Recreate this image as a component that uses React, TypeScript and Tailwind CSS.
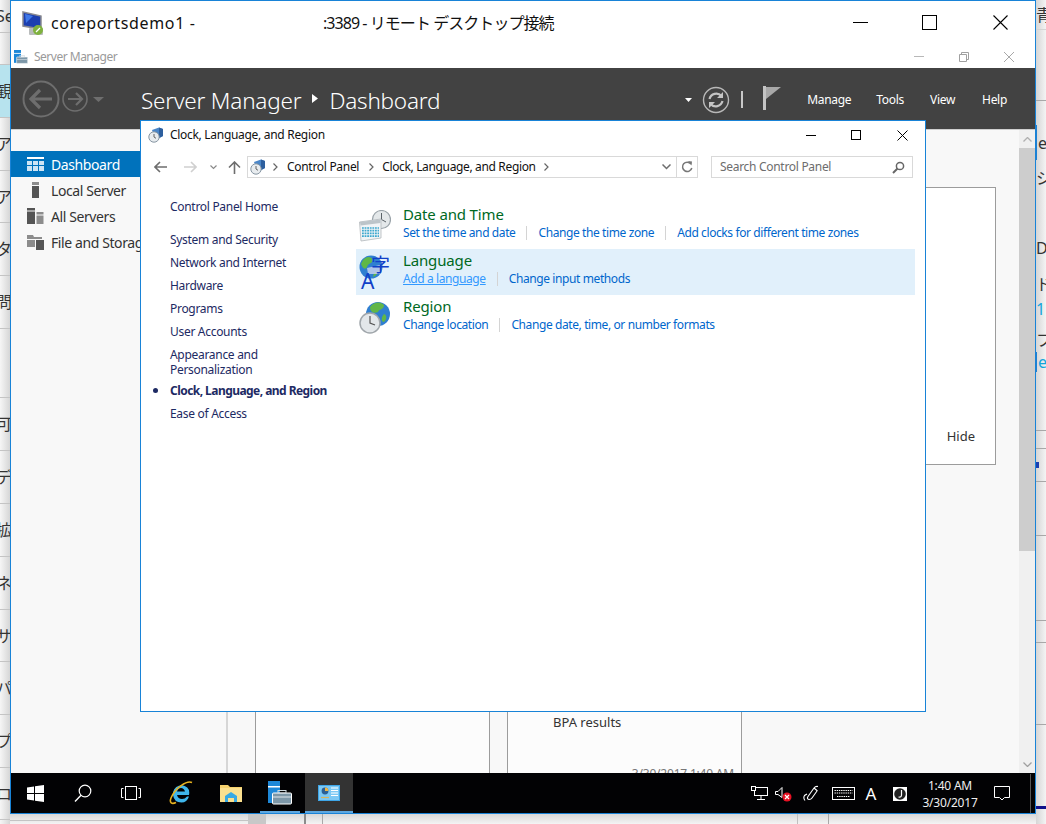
const leftRows = [
  { h: 33, text: 'Se' },
  { h: 32, text: '' },
  { h: 53, text: '観', blue: true },
  { h: 53, text: 'ア' },
  { h: 52, text: 'ア' },
  { h: 53, text: 'タ' },
  { h: 53, text: '問' },
  { h: 69, text: '' },
  { h: 53, text: '可' },
  { h: 53, text: 'デ' },
  { h: 53, text: '拡' },
  { h: 53, text: 'ネ' },
  { h: 52, text: 'サ' },
  { h: 53, text: 'パ' },
  { h: 53, text: 'プ' },
  { h: 52, text: 'ロ' },
]

const rightRows = [
  { h: 30, text: '青', line: 'border-[#d4d4d4]' },
  { h: 71, text: '', line: 'border-[#a8a8a8]' },
  { h: 24, text: '' },
  { h: 35, text: 'e', bar: true },
  { h: 36, text: 'シ' },
  { h: 39, text: '' },
  { h: 25, text: 'D' },
  { h: 12, text: '' },
  { h: 24, text: 'ド' },
  { h: 26, text: '1', cyan: true },
  { h: 6, text: '' },
  { h: 24, text: 'フ' },
  { h: 20, text: 'e', cyan: true, bar: true },
  { h: 59, text: '', line: 'border-[#a8a8a8]' },
  { h: 18, text: '', line: 'border-[#a8a8a8]' },
  { h: 33, text: '', line: 'border-[#a8a8a8]', mark: true },
  { h: 54, text: '', line: 'border-[#a8a8a8]' },
  { h: 85, text: '', line: 'border-[#a8a8a8]' },
  { h: 22, text: '', line: 'border-[#a8a8a8]' },
  { h: 82, text: '', line: 'border-[#a8a8a8]' },
  { h: 81, text: '' },
]

const navItems = [
  { label: 'System and Security', h: 23 },
  { label: 'Network and Internet', h: 23 },
  { label: 'Hardware', h: 23 },
  { label: 'Programs', h: 23 },
  { label: 'User Accounts', h: 23 },
  { label: 'Appearance and Personalization', h: 35 },
  { label: 'Clock, Language, and Region', h: 23, active: true },
  { label: 'Ease of Access', h: 23 },
]

const categories = [
  { title: 'Date and Time', icon: 'clock', links: ['Set the time and date', 'Change the time zone', 'Add clocks for different time zones'] },
  { title: 'Language', icon: 'language', links: ['Add a language', 'Change input methods'], hovered: true },
  { title: 'Region', icon: 'region', links: ['Change location', 'Change date, time, or number formats'] },
]

function RdpIcon() {
  return (
    <svg width="26" height="26" viewBox="0 0 26 26">
      <path d="M2 2 L20 6 V19 L2 16 Z" fill="#1c3fb0" stroke="#8a8a90" strokeWidth="1.5" />
      <path d="M4 4 L12 6 L5 13 Z" fill="#3f78e8" />
      <rect x="8" y="18" width="14" height="7" rx="1" fill="#b9bcbc" />
      <circle cx="17" cy="20" r="5" fill="#7fb23e" />
      <path d="M15 22 L19 18" stroke="#fff" strokeWidth="1.2" />
    </svg>
  )
}

function ServerManagerIcon({ size = 14 }: { size?: number }) {
  return (
    <svg width={size} height={size} viewBox="0 0 24 24">
      <rect x="0" y="0" width="12" height="22" fill="#1e88d8" />
      <rect x="0" y="5" width="12" height="1.5" fill="#fff" />
      <rect x="4.5" y="12" width="19" height="11" rx="1" fill="#7d97a8" stroke="#fff" strokeWidth="1" />
      <rect x="10" y="9.5" width="8" height="2.5" fill="none" stroke="#cfd8de" strokeWidth="1" />
      <rect x="5" y="15.5" width="18" height="1" fill="#dfe6ea" />
    </svg>
  )
}

function ControlPanelGlobe({ size = 16 }: { size?: number }) {
  return (
    <svg width={size} height={size} viewBox="0 0 16 16">
      <path d="M4 3 L11 0.5 L15 2 V9 L8 13 Z" fill="#4a86c8" />
      <path d="M11 0.5 L15 2 V9 L11 11 Z" fill="#2d5f9e" />
      <circle cx="6" cy="10" r="5.2" fill="#e8ecef" stroke="#8796a3" strokeWidth="1" />
      <path d="M6 7 V10 L8 11.3" fill="none" stroke="#555" strokeWidth="0.9" />
    </svg>
  )
}

function ClockCalendarIcon() {
  return (
    <svg width="32" height="32" viewBox="0 0 32 32">
      <circle cx="22.5" cy="9.5" r="9" fill="#e4e8ea" stroke="#9aa3a9" strokeWidth="1.2" />
      <path d="M22.5 3 V9.5 L27 12" fill="none" stroke="#5a6268" strokeWidth="1" />
      <path d="M0.5 12 L22 9 V28 L2 31 Z" fill="#f1f4f6" stroke="#b3b8bb" strokeWidth="0.8" />
      <path d="M1 12 L21.5 9.5 V13 L1.5 15.5 Z" fill="#bcc4c9" />
      <path d="M3 18 H20 M3 20.7 H20 M3 23.4 H20 M3 26.1 H20" stroke="#3ea8cf" strokeWidth="1.7" strokeDasharray="1.8 0.8" />
    </svg>
  )
}

function LanguageIcon() {
  return (
    <svg width="32" height="34" viewBox="0 0 32 34">
      <circle cx="12" cy="12" r="11.5" fill="#2f7fd1" />
      <path d="M4 5 C8 0 13 2 14 5 C13 9 9 8 8 12 C6 16 3 12 2 9 Z" fill="#5fb848" />
      <path d="M15 18 C18 15 21 16 21 13 C19 18 17 21 14 22 Z" fill="#5fb848" />
      <path d="M8 13 L21 10 V19 L9 19 Z" fill="#c4d0ee" opacity="0.85" />
      <text x="12" y="17" fontSize="19" fill="#1140c8" fontFamily="'Noto Sans CJK JP', sans-serif">字</text>
      <text x="2" y="34" fontSize="21" fill="#1140c8" fontFamily="'Noto Sans', sans-serif">A</text>
    </svg>
  )
}

function RegionIcon() {
  return (
    <svg width="32" height="34" viewBox="0 0 32 34">
      <circle cx="19" cy="13" r="12" fill="#2f7fd1" />
      <path d="M11 6 C16 0 22 1 25 4 C25 9 20 8 19 11 C15 13 11 11 11 6 Z" fill="#62b648" />
      <path d="M25 13 C28 14 28 18 25 21 C22 21 22 16 25 13 Z" fill="#62b648" />
      <circle cx="11" cy="22" r="10" fill="#e3e7ea" stroke="#a0a6ab" strokeWidth="1.5" />
      <path d="M11 15 V22 L16 24" fill="none" stroke="#555" strokeWidth="1.2" />
    </svg>
  )
}

function CategoryIcon({ name }: { name: string }) {
  if (name === 'clock') return <ClockCalendarIcon />
  if (name === 'language') return <LanguageIcon />
  return <RegionIcon />
}

function SidebarIcon({ name }: { name: string }) {
  if (name === 'dashboard') {
    return (
      <svg width="18" height="15" viewBox="0 0 18 15">
        <rect x="0" y="0" width="17" height="2" fill="#fff" />
        <path d="M0 4 H5 V8 H0 Z M6 4 H11 V8 H6 Z M12 4 H17 V8 H12 Z M0 9 H5 V14 H0 Z M6 9 H11 V14 H6 Z M12 9 H17 V14 H12 Z" fill="#cfe5f5" />
      </svg>
    )
  }
  if (name === 'local') {
    return (
      <svg width="18" height="16" viewBox="0 0 18 16">
        <rect x="5" y="0" width="7" height="3" fill="#8c8c8c" />
        <rect x="5" y="4" width="7" height="12" fill="#555" />
      </svg>
    )
  }
  if (name === 'all') {
    return (
      <svg width="18" height="16" viewBox="0 0 18 16">
        <rect x="0" y="0" width="8" height="2.5" fill="#555" />
        <rect x="0" y="3.5" width="8" height="12.5" fill="#555" />
        <rect x="9.5" y="4" width="7" height="2.5" fill="#8c8c8c" />
        <rect x="9.5" y="7.5" width="7" height="8.5" fill="#8c8c8c" />
      </svg>
    )
  }
  return (
    <svg width="18" height="16" viewBox="0 0 18 16">
      <path d="M0 1 H6 L7 3 H15 V5 H0 Z" fill="#8c8c8c" />
      <rect x="0" y="6" width="8" height="7" fill="#8c8c8c" />
      <rect x="9" y="6" width="8" height="10" fill="#555" />
    </svg>
  )
}

function LeftStrip() {
  return (
    <div className="flex h-[824px] w-[10px] shrink-0 flex-col overflow-hidden bg-linear-to-l from-[#d6d6d6] to-[#f6f6f6]">
      {leftRows.map((row, index) => (
        <div
          key={index}
          style={{ height: row.h }}
          className={`flex shrink-0 items-center overflow-hidden border-b border-[#c4c4c4] text-[16px] whitespace-nowrap text-[#333] ${row.blue ? 'bg-[#b7e3ee]' : ''}`}
        >
          <span className="ml-[-4px]">{row.text}</span>
        </div>
      ))}
    </div>
  )
}

function RightStrip() {
  return (
    <div className="flex h-[824px] w-[10px] shrink-0 flex-col overflow-hidden bg-linear-to-r from-[#d6d6d6] to-[#f4f4f4]">
      {rightRows.map((row, index) => (
        <div
          key={index}
          style={{ height: row.h }}
          className={`flex shrink-0 items-center overflow-hidden text-[16px] whitespace-nowrap ${row.line ? `border-b ${row.line}` : ''} ${row.cyan ? 'text-[#12a5dc]' : 'text-[#333]'}`}
        >
          {row.bar && <span className="mr-[1px] h-full w-[1px] shrink-0 bg-[#1f7fd0]" />}
          {row.mark && <span className="h-[6px] w-[3px] bg-[#1c3fb0]" />}
          <span>{row.text}</span>
        </div>
      ))}
      <div className="h-[3px] shrink-0 bg-[#10108a]" />
    </div>
  )
}

function RdpTitleBar() {
  return (
    <div className="flex h-[43px] shrink-0 items-center bg-white pl-[10px] text-[16px] text-[#111]">
      <RdpIcon />
      <span className="ml-[4px] w-[272px] tracking-[0.65px]">coreportsdemo1 -</span>
      <span className="whitespace-nowrap tracking-[-0.95px]">:3389 - リモート デスクトップ接続</span>
      <div className="ml-auto flex items-center pr-[27px]">
        <span className="h-[1px] w-[15px] bg-black" />
        <span className="ml-[54px] h-[15px] w-[15px] border border-black" />
        <svg className="ml-[56px]" width="15" height="15" viewBox="0 0 15 15">
          <path d="M0.5 0.5 L14.5 14.5 M14.5 0.5 L0.5 14.5" stroke="#000" strokeWidth="1.1" />
        </svg>
      </div>
    </div>
  )
}

function ServerManagerTitle() {
  return (
    <div className="flex h-[24px] shrink-0 items-center bg-white pt-[1px] pl-[3px] text-[12px] tracking-[-0.5px] text-[#9a9a9a]">
      <ServerManagerIcon />
      <span className="ml-[6px]">Server Manager</span>
      <div className="ml-auto flex items-center pr-[21px]">
        <span className="h-[1px] w-[10px] bg-[#b8b8b8]" />
        <svg className="ml-[35px]" width="10" height="10" viewBox="0 0 10 10">
          <path d="M0.5 2.5 H7.5 V9.5 H0.5 Z M2.5 2.5 V0.5 H9.5 V7.5 H7.5" fill="none" stroke="#a0a0a0" />
        </svg>
        <svg className="ml-[35px]" width="10" height="10" viewBox="0 0 10 10">
          <path d="M0 0 L10 10 M10 0 L0 10" stroke="#a8a8a8" />
        </svg>
      </div>
    </div>
  )
}

function ServerManagerHeader() {
  return (
    <div className="flex h-[62px] shrink-0 items-center border-b border-[#cfcfcf] bg-[#424242] pl-[11px] text-white">
      <svg width="84" height="40" viewBox="0 0 84 40">
        <circle cx="19" cy="20" r="17.5" fill="none" stroke="#6e6e6e" strokeWidth="2" />
        <path d="M9 20 H30 M18 11 L9 20 L18 29" fill="none" stroke="#6e6e6e" strokeWidth="3.2" />
        <circle cx="53" cy="20" r="12" fill="none" stroke="#6e6e6e" strokeWidth="1.6" />
        <path d="M46 20 H60 M54 14 L60 20 L54 26" fill="none" stroke="#6e6e6e" strokeWidth="2.2" />
        <path d="M71 18 H82 L76.5 23 Z" fill="#6e6e6e" />
      </svg>
      <span className="mt-[5px] ml-[35px] text-[22.5px] font-light tracking-[-0.2px] whitespace-nowrap">Server Manager</span>
      <svg className="ml-[11px]" width="6" height="9" viewBox="0 0 6 9">
        <path d="M0 0 L6 4.5 L0 9 Z" fill="#fff" />
      </svg>
      <span className="mt-[5px] ml-[11px] text-[22.5px] font-light tracking-[-0.2px]">Dashboard</span>
      <div className="ml-auto flex items-center pt-[2px] pr-[28px] text-[12px] tracking-[-0.3px]">
        <svg width="7" height="4" viewBox="0 0 7 4">
          <path d="M0 0 H7 L3.5 4 Z" fill="#fff" />
        </svg>
        <svg className="ml-[10px]" width="28" height="28" viewBox="0 0 28 28">
          <circle cx="14" cy="14" r="12.5" fill="none" stroke="#b8b8b8" strokeWidth="1.4" />
          <path d="M7.5 13 A7 7 0 0 1 19.5 10 M20.5 15 A7 7 0 0 1 8.5 18" fill="none" stroke="#c4c4c4" strokeWidth="2.2" />
          <path d="M21 6 V12 H15 Z M7 22 V16 H13 Z" fill="#c4c4c4" />
        </svg>
        <span className="ml-[11px] h-[17px] w-[2px] bg-[#c8c8c8]" />
        <svg className="mb-[4px] ml-[20px]" width="18" height="24" viewBox="0 0 18 24">
          <rect x="0" y="0" width="3" height="24" fill="#c4c4c4" />
          <path d="M3 1 H18 L3 13 Z" fill="#a8a8a8" />
        </svg>
        <span className="ml-[26px]">Manage</span>
        <span className="ml-[25px]">Tools</span>
        <span className="ml-[26px]">View</span>
        <span className="ml-[27px]">Help</span>
      </div>
    </div>
  )
}

function Sidebar() {
  const items = [
    { label: 'Dashboard', icon: 'dashboard', active: true },
    { label: 'Local Server', icon: 'local' },
    { label: 'All Servers', icon: 'all' },
    { label: 'File and Storage Services', icon: 'file' },
  ]

  return (
    <div className="w-[217px] shrink-0 border-r-2 border-[#d6d6d6] pt-[21px] text-[14px] tracking-[-0.4px]">
      {items.map((item) => (
        <div
          key={item.label}
          className={`flex h-[26px] items-center pl-[16px] whitespace-nowrap ${item.active ? 'bg-[#0072bc] text-white' : 'text-[#333]'}`}
        >
          <SidebarIcon name={item.icon} />
          <span className="ml-[6px]">{item.label}</span>
        </div>
      ))}
    </div>
  )
}

function DashboardContent() {
  return (
    <div className="min-w-0 flex-1 overflow-hidden pt-[57px] pl-[27px] text-[13px] text-[#333]">
      <div className="flex h-[278px] w-[741px] items-end justify-end border border-[#9c9c9c] bg-white pr-[20px] pb-[18px]">
        Hide
      </div>
      <div className="mt-[21px] flex gap-[17px]">
        <div className="h-[400px] w-[235px] shrink-0 border border-[#9c9c9c] bg-[#fcfcfc]" />
        <div className="h-[400px] w-[235px] shrink-0 border border-[#9c9c9c] bg-[#fcfcfc] pt-[227px]">
          <div className="pl-[45px] leading-[16px]">BPA results</div>
          <div className="mt-[36px] pr-[7px] text-right text-[12px] leading-[16px] tracking-[-0.2px] text-[#777]">3/30/2017 1:40 AM</div>
        </div>
      </div>
    </div>
  )
}

function ScrollBar() {
  return (
    <div className="flex w-[16px] shrink-0 flex-col bg-[#f0f0f0]">
      <div className="flex h-[18px] items-center justify-center">
        <svg width="9" height="5" viewBox="0 0 9 5">
          <path d="M0.5 4.5 L4.5 0.5 L8.5 4.5" fill="none" stroke="#b0b0b0" strokeWidth="1.3" />
        </svg>
      </div>
      <div className="h-[403px] bg-[#cdcdcd]" />
      <div className="flex flex-1 items-end justify-center pb-[6px]">
        <svg width="9" height="5" viewBox="0 0 9 5">
          <path d="M0.5 0.5 L4.5 4.5 L8.5 0.5" fill="none" stroke="#a0a0a0" strokeWidth="1.3" />
        </svg>
      </div>
    </div>
  )
}

function Crumb({ className }: { className: string }) {
  return (
    <svg className={className} width="5" height="8" viewBox="0 0 5 8">
      <path d="M0.5 0.5 L4 4 L0.5 7.5" fill="none" stroke="#666" strokeWidth="1.2" />
    </svg>
  )
}

function ControlPanelWindow() {
  return (
    <div className="absolute top-[119px] left-[129px] h-[592px] w-[786px] border border-[#1883d7] bg-white text-[12px] tracking-[-0.3px]">
      <div className="flex h-[28px] items-center pl-[7px] text-[#111]">
        <ControlPanelGlobe />
        <span className="ml-[6px]">Clock, Language, and Region</span>
        <div className="ml-auto flex items-center pr-[17px]">
          <span className="h-[1px] w-[10px] bg-black" />
          <span className="ml-[35px] h-[10px] w-[10px] border border-black" />
          <svg className="ml-[36px]" width="11" height="11" viewBox="0 0 11 11">
            <path d="M0.5 0.5 L10.5 10.5 M10.5 0.5 L0.5 10.5" stroke="#000" />
          </svg>
        </div>
      </div>
      <div className="mt-[7px] flex h-[22px] items-center pl-[13px]">
        <svg width="13" height="12" viewBox="0 0 13 12">
          <path d="M1 6 H13 M6 1 L1 6 L6 11" fill="none" stroke="#6e6e6e" strokeWidth="1.6" />
        </svg>
        <svg className="ml-[17px]" width="13" height="12" viewBox="0 0 13 12">
          <path d="M0 6 H12 M7 1 L12 6 L7 11" fill="none" stroke="#d0d0d0" strokeWidth="1.6" />
        </svg>
        <svg className="ml-[13px]" width="7" height="5" viewBox="0 0 7 5">
          <path d="M0.5 0.5 L3.5 3.5 L6.5 0.5" fill="none" stroke="#8a8a8a" strokeWidth="1.2" />
        </svg>
        <svg className="ml-[11px]" width="13" height="13" viewBox="0 0 13 13">
          <path d="M6.5 13 V1 M1 6.5 L6.5 1 L12 6.5" fill="none" stroke="#6e6e6e" strokeWidth="1.6" />
        </svg>
        <div className="ml-[6px] flex h-[22px] w-[451px] items-center border border-[#d9d9d9] pl-[2px] text-[#111]">
          <ControlPanelGlobe />
          <Crumb className="ml-[7px]" />
          <span className="ml-[9px]">Control Panel</span>
          <Crumb className="ml-[10px]" />
          <span className="ml-[8px] tracking-[-0.35px]">Clock, Language, and Region</span>
          <Crumb className="ml-[8px]" />
          <div className="ml-auto flex h-full items-center">
            <svg width="9" height="6" viewBox="0 0 9 6">
              <path d="M0.5 0.5 L4.5 4.5 L8.5 0.5" fill="none" stroke="#6e6e6e" strokeWidth="1.5" />
            </svg>
            <span className="ml-[5px] h-full w-[1px] bg-[#d9d9d9]" />
            <svg className="mx-[4px]" width="12" height="12" viewBox="0 0 12 12">
              <path d="M10 3 A4.7 4.7 0 1 0 10.8 7" fill="none" stroke="#777" strokeWidth="1.5" />
              <path d="M7 0 L11 0.5 L10.5 4.5 Z" fill="#777" />
            </svg>
          </div>
        </div>
        <div className="ml-[13px] flex h-[22px] w-[202px] items-center justify-between border border-[#d9d9d9] pr-[7px] pl-[8px] text-[#6d6d6d]">
          <span>Search Control Panel</span>
          <svg width="13" height="13" viewBox="0 0 13 13">
            <circle cx="8" cy="5" r="3.6" fill="none" stroke="#666" strokeWidth="1.5" />
            <path d="M5.5 7.5 L1 12" stroke="#666" strokeWidth="2" />
          </svg>
        </div>
      </div>
      <div className="flex pt-[21px]">
        <div className="w-[215px] shrink-0 pl-[29px] leading-[15px] text-[#1d2a63]">
          <div className="h-[33px]">Control Panel Home</div>
          {navItems.map((item) => (
            <div
              key={item.label}
              style={{ height: item.h === 35 ? 36 : item.h }}
              className={`relative w-[160px] ${item.active ? 'font-bold tracking-[-0.55px] whitespace-nowrap' : ''}`}
            >
              {item.active && <span className="absolute top-[5px] left-[-17px] h-[5px] w-[5px] rounded-full bg-[#1d2a63]" />}
              {item.label}
            </div>
          ))}
        </div>
        <div className="w-[559px] shrink-0 pt-[4px]">
          {categories.map((category) => (
            <div key={category.title} className={`flex h-[46px] pl-[3px] ${category.hovered ? 'bg-[#e1f0fb]' : ''}`}>
              <div className="flex w-[44px] shrink-0 items-center justify-start">
                <CategoryIcon name={category.icon} />
              </div>
              <div>
                <div className="h-[22px] text-[15px] leading-[22px] tracking-[-0.15px] text-[#00691f]">{category.title}</div>
                <div className="flex h-[16px] items-center gap-[11px] tracking-[-0.4px] whitespace-nowrap text-[#0066cc]">
                  {category.links.map((link, index) => (
                    <div key={link} className="flex items-center gap-[11px]">
                      {index > 0 && <span className="h-[14px] w-[1px] bg-[#d4d4d4]" />}
                      <span className={category.hovered && index === 0 ? 'text-[#3399ff] underline' : ''}>{link}</span>
                    </div>
                  ))}
                </div>
              </div>
            </div>
          ))}
        </div>
      </div>
    </div>
  )
}

function Slot({ children, className = '', underline = '' }: { children: React.ReactNode; className?: string; underline?: string }) {
  return (
    <div className={`relative flex h-full w-[48px] shrink-0 items-center justify-center ${className}`}>
      {children}
      {underline && <span className={`absolute bottom-0 h-[2px] bg-[#5ea8e0] ${underline}`} />}
    </div>
  )
}

function Taskbar() {
  return (
    <div className="flex h-[40px] shrink-0 items-center bg-[#020204] text-white">
      <Slot>
        <svg width="17" height="17" viewBox="0 0 17 17">
          <path d="M0 2.5 L7 1.5 V8 H0 Z M8 1.3 L17 0 V8 H8 Z M0 9 H7 V15.5 L0 14.5 Z M8 9 H17 V17 L8 15.7 Z" fill="#fff" />
        </svg>
      </Slot>
      <Slot>
        <svg width="18" height="18" viewBox="0 0 18 18">
          <circle cx="11" cy="7" r="5.8" fill="none" stroke="#fff" strokeWidth="1.2" />
          <path d="M7 11.3 L1 17.5" stroke="#fff" strokeWidth="1.4" />
        </svg>
      </Slot>
      <Slot>
        <svg width="20" height="14" viewBox="0 0 20 14">
          <rect x="4.5" y="0.5" width="11" height="13" fill="none" stroke="#fff" />
          <path d="M2.5 2.5 H0.5 V11.5 H2.5 M17.5 2.5 H19.5 V11.5 H17.5" fill="none" stroke="#fff" />
        </svg>
      </Slot>
      <Slot className="ml-[2px]">
        <svg width="24" height="24" viewBox="0 0 24 24">
          <path d="M4 14 A8.5 8.5 0 0 1 20 9 Q20.5 12 20 14 H8 Q9 18 13 18 Q16 18 18 15.5 H20 Q18 21.5 12.5 21.5 Q5 21.5 4 14 Z M8 10.5 H16 Q15 7 12 7 Q9 7 8 10.5 Z" fill="#3fb6ec" />
          <path d="M23 1.5 C18 -1 6 7 2 17 C0 22 3 23.5 7 21.5" fill="none" stroke="#e8b320" strokeWidth="1.6" />
        </svg>
      </Slot>
      <Slot className="ml-[2px]">
        <svg width="22" height="18" viewBox="0 0 22 18">
          <path d="M0 1 H8 L10 3 H22 V18 H0 Z" fill="#f6d26d" />
          <rect x="0" y="4" width="22" height="14" fill="#fbe08f" />
          <path d="M5 12 L11 8 L17 12 V18 H14 V14 H8 V18 H5 Z" fill="#38a9e4" />
        </svg>
      </Slot>
      <Slot className="ml-[1px] pb-[1px]" underline="right-[4px] left-[4px]">
        <ServerManagerIcon size={24} />
      </Slot>
      <Slot className="ml-[1px] bg-[#333]" underline="right-0 left-0">
        <svg width="22" height="16" viewBox="0 0 22 16">
          <rect x="0" y="0" width="22" height="16" fill="#3ea6e8" />
          <rect x="1" y="1" width="20" height="14" fill="#7cc8f4" />
          <circle cx="7" cy="6" r="3.4" fill="#2b5f94" />
          <path d="M7 6 V2.6 A3.4 3.4 0 0 1 10.4 6 Z" fill="#f2b440" />
          <path d="M13 3 H20 M13 5.5 H20 M13 8 H20 M13 10.5 H20" stroke="#fff" strokeWidth="1.1" />
          <path d="M3 12.5 H11" stroke="#d7b35d" strokeWidth="1.2" />
        </svg>
      </Slot>
      <div className="ml-auto flex h-full items-center pt-[1px]">
        <svg width="17" height="15" viewBox="0 0 17 15">
          <rect x="3.5" y="1.5" width="13" height="8" fill="none" stroke="#fff" />
          <rect x="0.5" y="0.5" width="4" height="4" fill="#020204" stroke="#fff" />
          <path d="M10 10 V13 M6 13.5 H14" stroke="#fff" />
        </svg>
        <svg className="ml-[7px]" width="17" height="16" viewBox="0 0 17 16">
          <path d="M0.5 5.5 H3 L7 1.5 V11.5 L3 8.5 H0.5 Z" fill="none" stroke="#fff" />
          <circle cx="12" cy="11" r="4.5" fill="#e81123" />
          <path d="M10 9 L14 13 M14 9 L10 13" stroke="#fff" strokeWidth="1.2" />
        </svg>
        <svg className="ml-[11px]" width="17" height="17" viewBox="0 0 17 17">
          <path d="M15 1.5 Q12.5 1 11 3 L5 11.5 Q3.5 14 6 14.5 Q8 14.5 9 13 L14 6 M11 3 L14.5 6 M2 15.5 Q0 13 1.5 10.5 L4 9" fill="none" stroke="#fff" strokeWidth="1.1" />
        </svg>
        <svg className="ml-[12px]" width="23" height="13" viewBox="0 0 23 13">
          <rect x="0.5" y="0.5" width="22" height="12" fill="none" stroke="#fff" />
          <path d="M2.5 3.5 H20.5 M2.5 6 H20.5 M5 9.5 H18" stroke="#fff" strokeDasharray="1.4 0.8" />
        </svg>
        <span className="ml-[10px] w-[12px] text-center text-[17px] leading-none">A</span>
        <svg className="ml-[16px]" width="14" height="14" viewBox="0 0 14 14">
          <rect width="14" height="14" fill="#fff" />
          <circle cx="7" cy="7" r="5.8" fill="#222" />
          <path d="M8.5 3 V8 Q8.5 10.5 5.5 10" fill="none" stroke="#fff" strokeWidth="1.2" />
        </svg>
        <div className="ml-[12px] w-[62px] text-center text-[12px] leading-[17px] tracking-[-0.2px] text-[#eee]">
          <div>1:40 AM</div>
          <div>3/30/2017</div>
        </div>
        <svg className="ml-[13px]" width="16" height="15" viewBox="0 0 16 15">
          <path d="M0.5 0.5 H15.5 V11.5 H10.5 L8 14 L5.5 11.5 H0.5 Z" fill="none" stroke="#fff" />
        </svg>
        <span className="mr-[4px] ml-[20px] h-full w-[1px] bg-[#555]" />
      </div>
    </div>
  )
}

function BottomStrip() {
  return (
    <div className="flex h-[10px] shrink-0 bg-linear-to-b from-[#d8d8d8] to-[#f4f4f4]">
      <div className="h-[7px] w-[238px] shrink-0 border-b border-[#c4c4c4]" />
      <div className="w-[18px] shrink-0 bg-[#c8c8c8]" />
      <div className="w-[38px] shrink-0" />
      <div className="w-[2px] shrink-0 bg-[#8c8c8c]" />
      <div className="w-[16px] shrink-0" />
      <div className="w-[1px] shrink-0 bg-[#a8a8a8]" />
      <div className="w-[474px] shrink-0" />
      <div className="w-[1px] shrink-0 bg-[#c0c0c0]" />
      <div className="w-[30px] shrink-0" />
      <div className="w-[1px] shrink-0 bg-[#a8a8a8]" />
    </div>
  )
}

export default function App() {
  return (
    <div className="flex h-[824px] w-[1046px] overflow-hidden bg-[#f4f4f4] font-['Noto_Sans','Noto_Sans_CJK_JP',sans-serif]">
      <LeftStrip />
      <div className="flex w-[1026px] shrink-0 flex-col">
        <div className="relative flex h-[814px] shrink-0 flex-col border border-[#1883d7] bg-[#f8f8f8]">
          <RdpTitleBar />
          <ServerManagerTitle />
          <ServerManagerHeader />
          <div className="flex min-h-0 flex-1 overflow-hidden">
            <Sidebar />
            <DashboardContent />
            <ScrollBar />
          </div>
          <Taskbar />
          <ControlPanelWindow />
        </div>
        <BottomStrip />
      </div>
      <RightStrip />
    </div>
  )
}
